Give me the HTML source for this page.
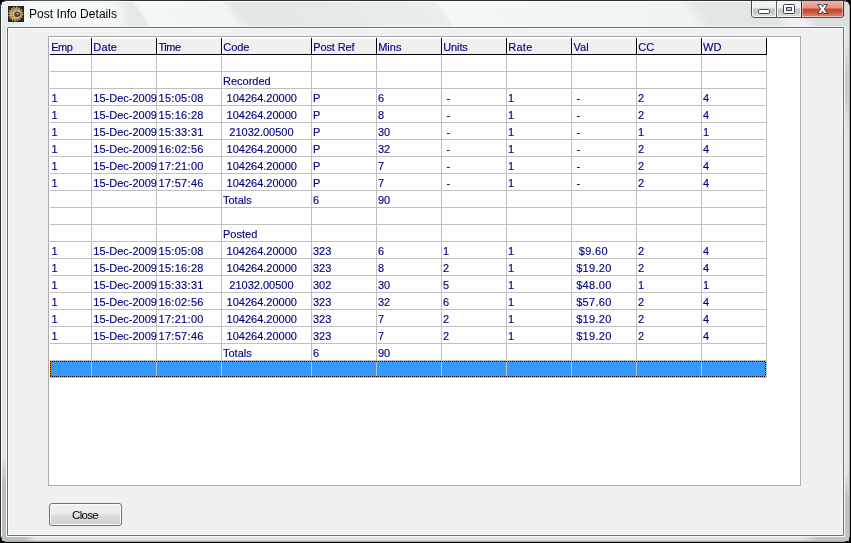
<!DOCTYPE html>
<html><head><meta charset="utf-8"><title>Post Info Details</title>
<style>
html,body{margin:0;padding:0}
body{width:851px;height:543px;overflow:hidden;position:relative;background:#000;font-family:"Liberation Sans",sans-serif;font-size:11px;color:#000084}
div,span,svg{position:absolute;box-sizing:border-box}
#wb{left:0;top:0;width:850px;height:542px;border-radius:7px;border:1px solid;border-color:#2e3232 #3ccdf8 #3ccdf8 #2e3232;background:#dfe4e5;overflow:hidden}
#wf{left:0;top:0;width:848px;height:540px;border-radius:6px;border-top:1px solid #fff;border-left:1px solid #fff;border-right:1px solid #e6e4e4;border-bottom:1px solid #d8d4d2;background:#e1e6e7}
#stk{left:2px;top:2px;width:846px;height:24px;overflow:hidden}
#sk{left:-30px;top:0;width:910px;height:24px;transform:skewX(35deg);background:linear-gradient(90deg,#e6ebec 28px,#eef2f2 58px,#eef2f2 138px,#e4e9ea 150px,#e4e9ea 168px,#f3f7f7 172px,#f1f5f5 256px,#e2e7e8 268px,#e3e8e9 328px,#e9eded 458px,#e9eded 470px,#f3f7f7 475px,#f1f5f5 628px,#eff3f3 716px,#e1e6e7 732px,#e1e6e7 800px,#edf1f1 812px,#edf1f1 826px,#dbdfe0 840px,#d9ddde 877px)}
#dkl{left:2px;top:455px;width:4px;height:86px;background:linear-gradient(180deg,rgba(185,191,191,0),#b9bfbf 30px)}
#dkb{left:2px;top:537px;width:34px;height:4px;background:linear-gradient(90deg,#b9bfbf 0,#b9bfbf 22px,rgba(185,191,191,0))}
#dkb2{left:800px;top:537px;width:48px;height:4px;background:linear-gradient(90deg,rgba(190,196,196,0),#bec4c4 18px)}
#dkr{left:845px;top:470px;width:4px;height:71px;background:linear-gradient(180deg,rgba(190,196,196,0),#bec4c4 30px)}
#dkr2{left:845px;top:40px;width:4px;height:90px;background:linear-gradient(180deg,rgba(200,205,205,0),#c8cdcd 30px,#c8cdcd 60px,rgba(200,205,205,0))}
#glow{left:22px;top:3px;width:104px;height:21px;border-radius:10px;background:rgba(255,255,255,.6);filter:blur(4px)}
#ttext{left:29px;top:7px;font-size:12px;letter-spacing:.04px;color:#000;white-space:nowrap;line-height:14px}
#icon{left:8px;top:6px;width:16px;height:16px}
#cl0{left:6px;top:26px;width:839px;height:511px;border:1px solid #f6f8f8;border-radius:2px}
#client{left:7px;top:27px;width:837px;height:509px;background:#f0f0f0;border:1px solid #696d6d;border-radius:1px;box-shadow:inset 0 0 0 1px #fafafa}
#panel{left:48px;top:36px;width:753px;height:450px;background:#fff;border:1px solid #abadb3}
#hbar{left:50px;top:38px;width:717px;height:17px;background:#f0f0f0;border-top:1px solid #fff;border-bottom:1px solid #000}
.hw{top:38px;width:1px;height:16px;background:#fff}
.hb{top:38px;width:1px;height:17px;background:#000}
.ht{top:41px;height:13px;line-height:13px;white-space:nowrap}
.vl{top:55px;width:1px;height:323px;background:#c0c0c0}
.hl{left:50px;width:717px;height:1px;background:#c0c0c0}
.c{white-space:nowrap;height:16px;line-height:16px}
#tx{left:0;top:0;width:851px;height:543px;will-change:transform;-webkit-text-stroke:.15px #000084}
#ttext{-webkit-text-stroke:0}
#sel{left:50px;top:361px;width:716px;height:16px;background:
 repeating-linear-gradient(90deg,#000 0,#000 1px,#e87800 1px,#e87800 2px) 0 0/100% 1px no-repeat,
 repeating-linear-gradient(90deg,#000 0,#000 1px,#e87800 1px,#e87800 2px) 0 100%/100% 1px no-repeat,
 repeating-linear-gradient(180deg,#000 0,#000 1px,#e87800 1px,#e87800 2px) 0 0/1px 100% no-repeat,
 repeating-linear-gradient(180deg,#e87800 0,#e87800 1px,#000 1px,#000 2px) 100% 0/1px 100% no-repeat,
 #3399ff}
.sv{top:362px;width:1px;height:14px;background:#c0c0c0}
#btn{left:49px;top:503px;width:73px;height:23px;border:1px solid #707070;border-radius:3px;background:linear-gradient(180deg,#f2f2f2 0,#ebebeb 10px,#dddddd 11px,#cfcfcf 21px);box-shadow:inset 0 0 0 1px #fcfcfc}
#tx2{left:0;top:0;width:851px;height:543px;will-change:transform}
#btx{left:49px;width:72px;top:508px;text-align:center;color:#000;font-size:11.5px;letter-spacing:-.7px;line-height:14px}
#cap{left:751px;top:1px;width:93px;height:17px;border:1px solid #4a4c50;border-top:none;border-radius:0 0 4px 4px;overflow:hidden;background:#fff}
.cb{top:-1px;height:17px}
#bmin{left:0;width:24px}
#bmax{left:24px;width:25px;border-left:1px solid #5a5c60}
#bmin,#bmax{background:linear-gradient(180deg,#f4f6f6 0,#eceeee 8px,#c2c6c8 9px,#c6cacc 13px,#e2e5e6 17px);box-shadow:inset 1px 0 0 #fbfbfb,inset -1px 0 0 #f4f4f4,inset 0 -1px 0 #f4f4f4}
#bclose{left:49px;width:42px;border-left:1px solid #5a2018;background:linear-gradient(180deg,#f0b8ac 0,#e49484 8px,#c8472e 9px,#cc5238 12px,#da8068 16px,#e8a898 17px);box-shadow:inset 1px 0 0 rgba(255,255,255,.45),inset -1px 0 0 rgba(255,255,255,.45),inset 0 -1px 0 rgba(255,255,255,.4),inset 0 1px 0 rgba(255,255,255,.5)}
#cap2{left:843px;top:1px;width:1px;height:15px;background:#5a2018}
</style></head><body>
<div id="wb"><div id="wf"></div></div>
<div id="stk"><div id="sk"></div></div>
<div id="dkl"></div><div id="dkb"></div><div id="dkb2"></div><div id="dkr"></div><div id="dkr2"></div>
<div id="glow"></div>
<svg id="icon" viewBox="0 0 16 16"><rect width="16" height="16" fill="#2b241e"/><circle cx="7.8" cy="8" r="6.1" fill="#b89a52"/><circle cx="7.8" cy="8" r="6.6" fill="none" stroke="#c9ad62" stroke-width="1.6" stroke-dasharray="1.5 1.1"/><circle cx="7.8" cy="8" r="4.6" fill="none" stroke="#d8c078" stroke-width="1.2" opacity=".8"/><path d="M4.2 5.4 Q7 3 10.4 4.2" stroke="#6f7f96" stroke-width="1.1" fill="none"/><circle cx="9.4" cy="8.2" r="3" fill="#4a4035"/><path d="M11.5 5.8 A3.6 3.6 0 1 0 11.8 10.4" stroke="#e0c880" stroke-width="1.1" fill="none"/><circle cx="9.6" cy="7.8" r="1.5" fill="#6f7b80"/><circle cx="10" cy="7.4" r=".7" fill="#a9b4b8"/><circle cx="5" cy="10.5" r=".8" fill="#8a5a30" opacity=".8"/><circle cx="4.2" cy="7.5" r=".6" fill="#6e5a34" opacity=".8"/><circle cx="8" cy="12.6" r=".6" fill="#5e4c2c" opacity=".8"/><circle cx="11.6" cy="11.8" r=".6" fill="#6e5a34" opacity=".8"/></svg>
<div id="cap"><div class="cb" id="bmin"></div><div class="cb" id="bmax"></div><div class="cb" id="bclose"></div></div>
<div id="cap2"></div>
<svg style="left:751px;top:0;width:93px;height:18px" viewBox="0 0 93 18">
<rect x="7.5" y="9.5" width="11" height="4" rx="1" fill="#fff" stroke="#3e4260" stroke-width="1"/>
<rect x="32.5" y="4.5" width="11" height="9" rx="1" fill="#fff" stroke="#3e4260" stroke-width="1"/>
<rect x="35.5" y="7.5" width="5" height="3" fill="#c8ccd0" stroke="#3e4260" stroke-width="1"/>
<path d="M66.5 4.5 L70 4.5 L71.5 6.6 L73 4.5 L76.5 4.5 L73.4 9 L76.5 13.5 L73 13.5 L71.5 11.4 L70 13.5 L66.5 13.5 L69.6 9 Z" fill="#fff" stroke="#3a3e58" stroke-width="1" stroke-linejoin="round"/>
</svg>
<div id="cl0"></div>
<div id="client"></div>
<div id="panel"></div>
<div id="hbar"></div>
<div class="hw" style="left:50px"></div><div class="hb" style="left:91px"></div>
<div class="hw" style="left:92px"></div><div class="hb" style="left:156px"></div>
<div class="hw" style="left:157px"></div><div class="hb" style="left:221px"></div>
<div class="hw" style="left:222px"></div><div class="hb" style="left:311px"></div>
<div class="hw" style="left:312px"></div><div class="hb" style="left:376px"></div>
<div class="hw" style="left:377px"></div><div class="hb" style="left:441px"></div>
<div class="hw" style="left:442px"></div><div class="hb" style="left:506px"></div>
<div class="hw" style="left:507px"></div><div class="hb" style="left:571px"></div>
<div class="hw" style="left:572px"></div><div class="hb" style="left:636px"></div>
<div class="hw" style="left:637px"></div><div class="hb" style="left:701px"></div>
<div class="hw" style="left:702px"></div><div class="hb" style="left:766px"></div>
<div class="vl" style="left:91px"></div>
<div class="vl" style="left:156px"></div>
<div class="vl" style="left:221px"></div>
<div class="vl" style="left:311px"></div>
<div class="vl" style="left:376px"></div>
<div class="vl" style="left:441px"></div>
<div class="vl" style="left:506px"></div>
<div class="vl" style="left:571px"></div>
<div class="vl" style="left:636px"></div>
<div class="vl" style="left:701px"></div>
<div class="vl" style="left:766px"></div>
<div class="hl" style="top:71px"></div>
<div class="hl" style="top:88px"></div>
<div class="hl" style="top:105px"></div>
<div class="hl" style="top:122px"></div>
<div class="hl" style="top:139px"></div>
<div class="hl" style="top:156px"></div>
<div class="hl" style="top:173px"></div>
<div class="hl" style="top:190px"></div>
<div class="hl" style="top:207px"></div>
<div class="hl" style="top:224px"></div>
<div class="hl" style="top:241px"></div>
<div class="hl" style="top:258px"></div>
<div class="hl" style="top:275px"></div>
<div class="hl" style="top:292px"></div>
<div class="hl" style="top:309px"></div>
<div class="hl" style="top:326px"></div>
<div class="hl" style="top:343px"></div>
<div class="hl" style="top:360px"></div>
<div class="hl" style="top:377px"></div>
<div id="sel"></div>
<div class="sv" style="left:91px"></div>
<div class="sv" style="left:156px"></div>
<div class="sv" style="left:221px"></div>
<div class="sv" style="left:311px"></div>
<div class="sv" style="left:376px"></div>
<div class="sv" style="left:441px"></div>
<div class="sv" style="left:506px"></div>
<div class="sv" style="left:571px"></div>
<div class="sv" style="left:636px"></div>
<div class="sv" style="left:701px"></div>
<div id="tx">
<span id="ttext">Post Info Details</span>
<span class="c" style="left:223px;top:73px">Recorded</span>
<span class="c" style="left:51.5px;top:90px">1</span>
<span class="c" style="left:93.3px;top:90px">15-Dec-2009</span>
<span class="c" style="left:158.5px;top:90px;letter-spacing:0.3px">15:05:08</span>
<span class="c" style="left:226.6px;top:90px">104264.20000</span>
<span class="c" style="left:313px;top:90px">P</span>
<span class="c" style="left:378px;top:90px">6</span>
<span class="c" style="left:446.5px;top:90px">-</span>
<span class="c" style="left:508px;top:90px">1</span>
<span class="c" style="left:576.5px;top:90px">-</span>
<span class="c" style="left:638px;top:90px">2</span>
<span class="c" style="left:703px;top:90px">4</span>
<span class="c" style="left:51.5px;top:107px">1</span>
<span class="c" style="left:93.3px;top:107px">15-Dec-2009</span>
<span class="c" style="left:158.5px;top:107px;letter-spacing:0.3px">15:16:28</span>
<span class="c" style="left:226.6px;top:107px">104264.20000</span>
<span class="c" style="left:313px;top:107px">P</span>
<span class="c" style="left:378px;top:107px">8</span>
<span class="c" style="left:446.5px;top:107px">-</span>
<span class="c" style="left:508px;top:107px">1</span>
<span class="c" style="left:576.5px;top:107px">-</span>
<span class="c" style="left:638px;top:107px">2</span>
<span class="c" style="left:703px;top:107px">4</span>
<span class="c" style="left:51.5px;top:124px">1</span>
<span class="c" style="left:93.3px;top:124px">15-Dec-2009</span>
<span class="c" style="left:158.5px;top:124px;letter-spacing:0.3px">15:33:31</span>
<span class="c" style="left:229.3px;top:124px">21032.00500</span>
<span class="c" style="left:313px;top:124px">P</span>
<span class="c" style="left:378px;top:124px">30</span>
<span class="c" style="left:446.5px;top:124px">-</span>
<span class="c" style="left:508px;top:124px">1</span>
<span class="c" style="left:576.5px;top:124px">-</span>
<span class="c" style="left:638px;top:124px">1</span>
<span class="c" style="left:703px;top:124px">1</span>
<span class="c" style="left:51.5px;top:141px">1</span>
<span class="c" style="left:93.3px;top:141px">15-Dec-2009</span>
<span class="c" style="left:158.5px;top:141px;letter-spacing:0.3px">16:02:56</span>
<span class="c" style="left:226.6px;top:141px">104264.20000</span>
<span class="c" style="left:313px;top:141px">P</span>
<span class="c" style="left:378px;top:141px">32</span>
<span class="c" style="left:446.5px;top:141px">-</span>
<span class="c" style="left:508px;top:141px">1</span>
<span class="c" style="left:576.5px;top:141px">-</span>
<span class="c" style="left:638px;top:141px">2</span>
<span class="c" style="left:703px;top:141px">4</span>
<span class="c" style="left:51.5px;top:158px">1</span>
<span class="c" style="left:93.3px;top:158px">15-Dec-2009</span>
<span class="c" style="left:158.5px;top:158px;letter-spacing:0.3px">17:21:00</span>
<span class="c" style="left:226.6px;top:158px">104264.20000</span>
<span class="c" style="left:313px;top:158px">P</span>
<span class="c" style="left:378px;top:158px">7</span>
<span class="c" style="left:446.5px;top:158px">-</span>
<span class="c" style="left:508px;top:158px">1</span>
<span class="c" style="left:576.5px;top:158px">-</span>
<span class="c" style="left:638px;top:158px">2</span>
<span class="c" style="left:703px;top:158px">4</span>
<span class="c" style="left:51.5px;top:175px">1</span>
<span class="c" style="left:93.3px;top:175px">15-Dec-2009</span>
<span class="c" style="left:158.5px;top:175px;letter-spacing:0.3px">17:57:46</span>
<span class="c" style="left:226.6px;top:175px">104264.20000</span>
<span class="c" style="left:313px;top:175px">P</span>
<span class="c" style="left:378px;top:175px">7</span>
<span class="c" style="left:446.5px;top:175px">-</span>
<span class="c" style="left:508px;top:175px">1</span>
<span class="c" style="left:576.5px;top:175px">-</span>
<span class="c" style="left:638px;top:175px">2</span>
<span class="c" style="left:703px;top:175px">4</span>
<span class="c" style="left:223px;top:192px">Totals</span>
<span class="c" style="left:313px;top:192px">6</span>
<span class="c" style="left:378px;top:192px">90</span>
<span class="c" style="left:223px;top:226px">Posted</span>
<span class="c" style="left:51.5px;top:243px">1</span>
<span class="c" style="left:93.3px;top:243px">15-Dec-2009</span>
<span class="c" style="left:158.5px;top:243px;letter-spacing:0.3px">15:05:08</span>
<span class="c" style="left:226.6px;top:243px">104264.20000</span>
<span class="c" style="left:313px;top:243px">323</span>
<span class="c" style="left:378px;top:243px">6</span>
<span class="c" style="left:443px;top:243px">1</span>
<span class="c" style="left:508px;top:243px">1</span>
<span class="c" style="left:578.8px;top:243px;letter-spacing:0.3px">$9.60</span>
<span class="c" style="left:638px;top:243px">2</span>
<span class="c" style="left:703px;top:243px">4</span>
<span class="c" style="left:51.5px;top:260px">1</span>
<span class="c" style="left:93.3px;top:260px">15-Dec-2009</span>
<span class="c" style="left:158.5px;top:260px;letter-spacing:0.3px">15:16:28</span>
<span class="c" style="left:226.6px;top:260px">104264.20000</span>
<span class="c" style="left:313px;top:260px">323</span>
<span class="c" style="left:378px;top:260px">8</span>
<span class="c" style="left:443px;top:260px">2</span>
<span class="c" style="left:508px;top:260px">1</span>
<span class="c" style="left:576.2px;top:260px;letter-spacing:0.3px">$19.20</span>
<span class="c" style="left:638px;top:260px">2</span>
<span class="c" style="left:703px;top:260px">4</span>
<span class="c" style="left:51.5px;top:277px">1</span>
<span class="c" style="left:93.3px;top:277px">15-Dec-2009</span>
<span class="c" style="left:158.5px;top:277px;letter-spacing:0.3px">15:33:31</span>
<span class="c" style="left:229.3px;top:277px">21032.00500</span>
<span class="c" style="left:313px;top:277px">302</span>
<span class="c" style="left:378px;top:277px">30</span>
<span class="c" style="left:443px;top:277px">5</span>
<span class="c" style="left:508px;top:277px">1</span>
<span class="c" style="left:576.2px;top:277px;letter-spacing:0.3px">$48.00</span>
<span class="c" style="left:638px;top:277px">1</span>
<span class="c" style="left:703px;top:277px">1</span>
<span class="c" style="left:51.5px;top:294px">1</span>
<span class="c" style="left:93.3px;top:294px">15-Dec-2009</span>
<span class="c" style="left:158.5px;top:294px;letter-spacing:0.3px">16:02:56</span>
<span class="c" style="left:226.6px;top:294px">104264.20000</span>
<span class="c" style="left:313px;top:294px">323</span>
<span class="c" style="left:378px;top:294px">32</span>
<span class="c" style="left:443px;top:294px">6</span>
<span class="c" style="left:508px;top:294px">1</span>
<span class="c" style="left:576.2px;top:294px;letter-spacing:0.3px">$57.60</span>
<span class="c" style="left:638px;top:294px">2</span>
<span class="c" style="left:703px;top:294px">4</span>
<span class="c" style="left:51.5px;top:311px">1</span>
<span class="c" style="left:93.3px;top:311px">15-Dec-2009</span>
<span class="c" style="left:158.5px;top:311px;letter-spacing:0.3px">17:21:00</span>
<span class="c" style="left:226.6px;top:311px">104264.20000</span>
<span class="c" style="left:313px;top:311px">323</span>
<span class="c" style="left:378px;top:311px">7</span>
<span class="c" style="left:443px;top:311px">2</span>
<span class="c" style="left:508px;top:311px">1</span>
<span class="c" style="left:576.2px;top:311px;letter-spacing:0.3px">$19.20</span>
<span class="c" style="left:638px;top:311px">2</span>
<span class="c" style="left:703px;top:311px">4</span>
<span class="c" style="left:51.5px;top:328px">1</span>
<span class="c" style="left:93.3px;top:328px">15-Dec-2009</span>
<span class="c" style="left:158.5px;top:328px;letter-spacing:0.3px">17:57:46</span>
<span class="c" style="left:226.6px;top:328px">104264.20000</span>
<span class="c" style="left:313px;top:328px">323</span>
<span class="c" style="left:378px;top:328px">7</span>
<span class="c" style="left:443px;top:328px">2</span>
<span class="c" style="left:508px;top:328px">1</span>
<span class="c" style="left:576.2px;top:328px;letter-spacing:0.3px">$19.20</span>
<span class="c" style="left:638px;top:328px">2</span>
<span class="c" style="left:703px;top:328px">4</span>
<span class="c" style="left:223px;top:345px">Totals</span>
<span class="c" style="left:313px;top:345px">6</span>
<span class="c" style="left:378px;top:345px">90</span>
<span class="ht" style="left:51.2px;letter-spacing:-0.45px">Emp</span>
<span class="ht" style="left:93.3px;letter-spacing:0.15px">Date</span>
<span class="ht" style="left:158.5px;letter-spacing:-0.5px">Time</span>
<span class="ht" style="left:223.2px;letter-spacing:0px">Code</span>
<span class="ht" style="left:313.2px;letter-spacing:-0.1px">Post Ref</span>
<span class="ht" style="left:378.2px;letter-spacing:0px">Mins</span>
<span class="ht" style="left:443.2px;letter-spacing:-0.1px">Units</span>
<span class="ht" style="left:508.2px;letter-spacing:0.3px">Rate</span>
<span class="ht" style="left:573.5px;letter-spacing:0px">Val</span>
<span class="ht" style="left:638.2px;letter-spacing:0px">CC</span>
<span class="ht" style="left:703.0px;letter-spacing:0px">WD</span>
</div>
<div id="btn"></div>
<div id="tx2"><span id="btx">Close</span></div>
</body></html>
